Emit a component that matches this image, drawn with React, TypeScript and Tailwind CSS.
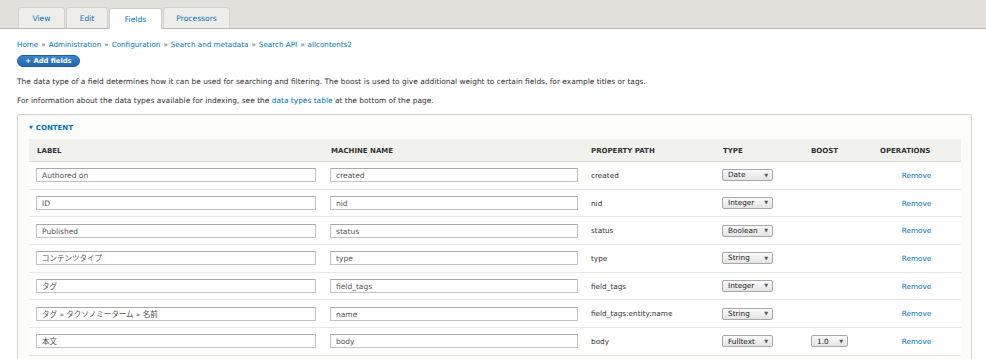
import React from 'react';

const tabs = [
  { label: 'View', w: 'w-[47px]' },
  { label: 'Edit', w: 'w-[42px]' },
  { label: 'Fields', w: 'w-[53px]', active: true },
  { label: 'Processors', w: 'w-[67px]' },
];

const crumbs = ['Home', 'Administration', 'Configuration', 'Search and metadata', 'Search API', 'allcontents2'];

const rows = [
  { label: 'Authored on', machine: 'created', path: 'created', type: 'Date' },
  { label: 'ID', machine: 'nid', path: 'nid', type: 'Integer' },
  { label: 'Published', machine: 'status', path: 'status', type: 'Boolean' },
  { label: 'コンテンツタイプ', machine: 'type', path: 'type', type: 'String' },
  { label: 'タグ', machine: 'field_tags', path: 'field_tags', type: 'Integer' },
  { label: 'タグ » タクソノミーターム » 名前', machine: 'name', path: 'field_tags:entity:name', type: 'String' },
  { label: '本文', machine: 'body', path: 'body', type: 'Fulltext', boost: '1.0' },
];

const cols = 'grid grid-cols-[294px_260px_132px_88px_69px_89px]';

function Select({ value, width }: { value: string; width: string }) {
  return (
    <div
      className={`${width} h-[12px] flex items-center justify-between pl-[5px] pr-[4px] rounded-[2px] border border-[#a8a8a8] bg-gradient-to-b from-[#fafafa] to-[#e4e4e4] text-[#222]`}
    >
      <span className="pt-px">{value}</span>
      <span className="text-[5px] text-[#555]">▼</span>
    </div>
  );
}

function TextBox({ value, width }: { value: string; width: string }) {
  return (
    <div
      className={`${width} h-[14px] flex items-center pl-[5px] pt-px border border-[#c2c2c2] border-t-[#a9a9a9] rounded-[1px] bg-white text-[#555] text-[7.5px] whitespace-nowrap`}
    >
      {value}
    </div>
  );
}

export default function App() {
  return (
    <div className="w-[986px] h-[359px] overflow-hidden bg-white text-[7.3px] text-[#333] font-['DejaVu_Sans','Noto_Sans_CJK_JP',sans-serif]">
      {/* Tabs bar */}
      <div className="h-[29px] bg-[#e1e0db] border-b border-[#b9b9b4] flex items-end pl-[18px] gap-[1px]">
        {tabs.map((t) => (
          <div
            key={t.label}
            className={`${t.w} h-[21px] flex items-center justify-center pt-px rounded-t-[3px] border border-b-0 text-[7.6px] text-[#0074bd] ${
              t.active
                ? 'bg-white border-[#cfcfca] relative top-px'
                : 'bg-[#eeede9] border-[#d3d2cc]'
            }`}
          >
            {t.label}
          </div>
        ))}
      </div>

      <div className="px-[17px]">
        {/* Breadcrumb */}
        <div className="mt-[11px] h-[10px] flex items-center gap-[3px] text-[7.2px]">
          {crumbs.map((c, i) => (
            <React.Fragment key={c}>
              {i > 0 && <span className="text-[#666]">»</span>}
              <span className="text-[#0074bd]">{c}</span>
            </React.Fragment>
          ))}
        </div>

        <div className="mt-[5px] w-[63px] h-[12px] flex items-center justify-center rounded-full bg-gradient-to-b from-[#3a86cf] to-[#2467ad] border border-[#1f5e9f] text-white font-bold text-[6.8px]">
          + Add fields
        </div>

        <p className="mt-[10px] h-[10px] leading-[10px] text-[7.45px]">
          The data type of a field determines how it can be used for searching and filtering. The boost is used to give additional weight to certain fields, for example titles or tags.
        </p>
        <p className="mt-[9px] h-[10px] leading-[10px] text-[7.45px]">
          For information about the data types available for indexing, see the{' '}
          <span className="text-[#0074bd]">data types table</span> at the bottom of the page.
        </p>

        {/* Fieldset */}
        <div className="mt-[8px] w-[955px] h-[260px] border border-[#d4d4cf] rounded-[2px] bg-[#fcfcfa] px-[11px]">
          <div className="h-[24px] flex items-center pt-[2px] text-[#0074bd] font-bold uppercase text-[7px]">
            <span className="text-[5px] mr-[3px]">▼</span>Content
          </div>

          <div className="w-[932px]">
            <div className={`${cols} h-[23px] items-center pt-[2px] bg-[#f1f1ee] border-b border-[#e2e2dd] font-bold uppercase text-[7px] text-[#333]`}>
              <div className="pl-[8px]">Label</div>
              <div className="pl-[8px]">Machine name</div>
              <div className="pl-[8px]">Property path</div>
              <div className="pl-[8px]">Type</div>
              <div className="pl-[8px]">Boost</div>
              <div className="pl-[8px]">Operations</div>
            </div>

            {rows.map((r) => (
              <div
                key={r.machine}
                className={`${cols} h-[27.7px] items-center bg-white border-b border-[#e8e8e4]`}
              >
                <div className="pl-[7px]">
                  <TextBox value={r.label} width="w-[280px]" />
                </div>
                <div className="pl-[7px]">
                  <TextBox value={r.machine} width="w-[248px]" />
                </div>
                <div className="pl-[8px] pt-[2px]">{r.path}</div>
                <div className="pl-[7px]">
                  <Select value={r.type} width="w-[51px]" />
                </div>
                <div className="pl-[8px]">
                  {r.boost && <Select value={r.boost} width="w-[37px]" />}
                </div>
                <div className="text-center pt-[2px] text-[#0074bd]">Remove</div>
              </div>
            ))}
          </div>
        </div>
      </div>
    </div>
  );
}
